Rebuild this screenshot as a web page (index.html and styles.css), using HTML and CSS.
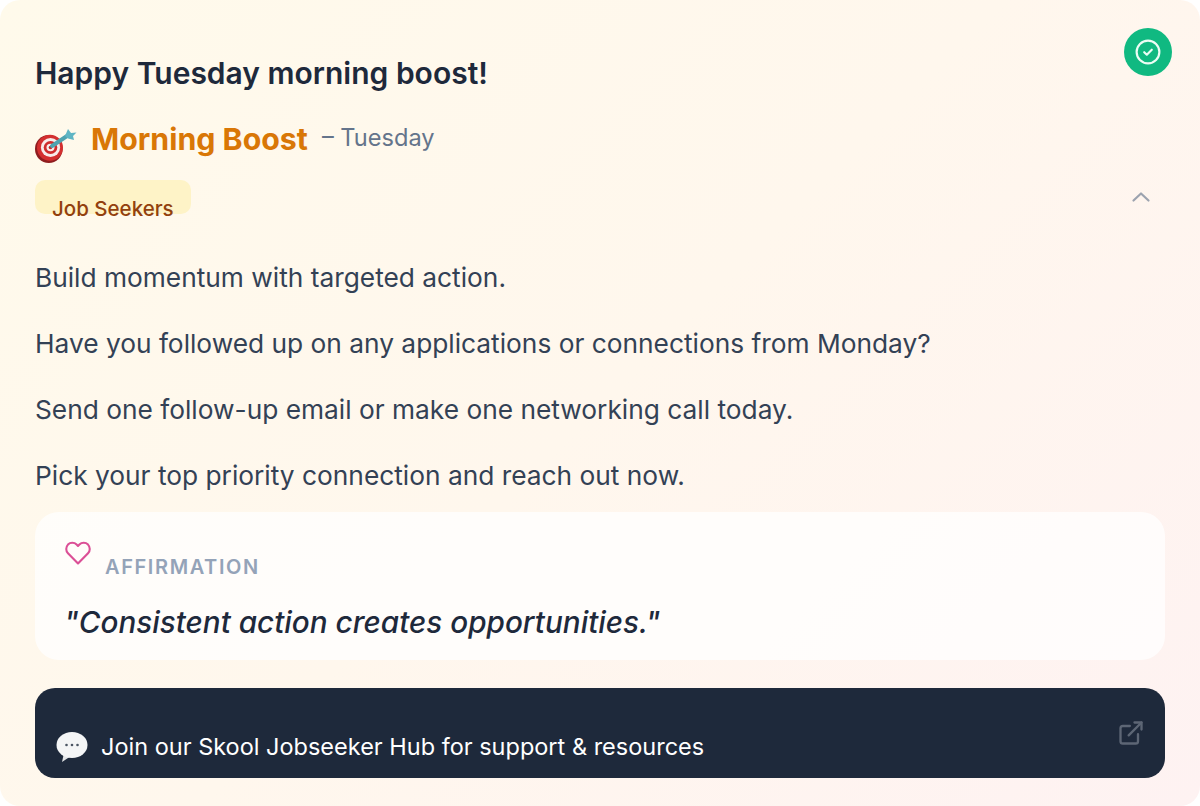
FILE: index.html
```html
<!DOCTYPE html>
<html lang="en">
  <head>
    <meta charset="UTF-8" />
    <meta name="viewport" content="width=device-width, initial-scale=1" />
    <title>Morning Boost</title>
    <link rel="stylesheet" href="styles.css">
  </head>
  <body>
    <div class="card">
      <!-- Done button -->
      <div class="done-btn">
        <svg width="26" height="26" viewBox="0 0 24 24" fill="none" stroke="#ecfdf5" stroke-width="2" stroke-linecap="round" stroke-linejoin="round">
          <circle cx="12" cy="12" r="10.5"></circle>
          <path d="M8.5 12.2l2.4 2.3 4.6-4.6"></path>
        </svg>
      </div>

      <h2 class="greeting">Happy Tuesday morning boost!</h2>

      <div class="boost-title">
        <svg class="target-icon" width="44" height="44" viewBox="0 0 44 44">
          <ellipse cx="13.800" cy="30" rx="13.800" ry="14" fill="#8f1d1f"></ellipse>
          <ellipse cx="15" cy="28.800" rx="13" ry="13" fill="#d32f2f"></ellipse>
          <ellipse cx="15.500" cy="28.500" rx="9.600" ry="9.400" fill="#f7ecea"></ellipse>
          <ellipse cx="15.500" cy="28.500" rx="6.800" ry="6.500" fill="#cf2c2c"></ellipse>
          <ellipse cx="15.500" cy="28.500" rx="4" ry="3.700" fill="#f7ecea"></ellipse>
          <ellipse cx="15.500" cy="28.500" rx="1.800" ry="1.700" fill="#c62828"></ellipse>
          <path d="M17 27L32 17" stroke="#4fa3b0" stroke-width="4" stroke-linecap="round"></path>
          <path d="M30 17l3-7 3 4 5.500-.5-3.500 3.500 1 4-6-1.500z" fill="#5fb5c4"></path>
        </svg>
        <span class="boost-name">Morning Boost</span>
        <span class="boost-day">– Tuesday</span>
      </div>

      <div class="badge-row">
        <span class="badge">Job Seekers</span>
        <svg class="chevron" width="24" height="24" viewBox="0 0 24 24" fill="none" stroke="#9ca3af" stroke-width="2.2" stroke-linecap="round" stroke-linejoin="round">
          <path d="M4.500 15.500L12 8.500l7.500 7"></path>
        </svg>
      </div>

      <div class="message">
        <p>Build momentum with targeted action.</p>
        <p>Have you followed up on any applications or connections from Monday?</p>
        <p>Send one follow-up email or make one networking call today.</p>
        <p>Pick your top priority connection and reach out now.</p>
      </div>

      <div class="affirmation">
        <div class="affirmation-head">
          <svg class="heart" width="28" height="26" viewBox="0 0 24 22" fill="none" stroke="#db4f96" stroke-width="1.8" stroke-linejoin="round">
            <path d="M12 20L3.400 11.200a5.400 5.400 0 0 1 0-7.400 5.200 5.200 0 0 1 7.400 0L12 5l1.200-1.200a5.200 5.200 0 0 1 7.400 0 5.400 5.400 0 0 1 0 7.400z"></path>
          </svg>
          <span class="affirmation-label">AFFIRMATION</span>
        </div>
        <p class="affirmation-text">"Consistent action creates opportunities."</p>
      </div>

      <a class="hub-link" href="#">
        <span class="hub-label">
          <svg width="34" height="34" viewBox="0 0 34 34">
            <path d="M9 24l-2 9 9-6z" fill="#e4e6e8"></path>
            <ellipse cx="17" cy="16" rx="15.500" ry="13" fill="#f4f5f6"></ellipse>
            <circle cx="11.500" cy="16" r="1.300" fill="#4b5563"></circle>
            <circle cx="17" cy="16" r="1.300" fill="#4b5563"></circle>
            <circle cx="22.500" cy="16" r="1.300" fill="#4b5563"></circle>
          </svg>
          Join our Skool Jobseeker Hub for support &amp; resources
        </span>
        <svg class="external" width="28" height="28" viewBox="0 0 24 24" fill="none" stroke="#5d6675" stroke-width="2" stroke-linecap="round" stroke-linejoin="round">
          <path d="M18 13v6a2 2 0 0 1-2 2H5a2 2 0 0 1-2-2V8a2 2 0 0 1 2-2h6"></path>
          <path d="M15 3h6v6"></path>
          <path d="M10 14L21 3"></path>
        </svg>
      </a>
    </div>
  </body>
</html>
```

FILE: styles.css
```css
/* Global Styles */
body {
  margin: 0;
  background-color: #ffffff;
  font-family: Inter, "Liberation Sans", sans-serif;
}

/* Card */
.card {
  position: relative;
  box-sizing: border-box;
  height: 806px;
  padding: 55px 35px 28px;
  border-radius: 20px;
  background: linear-gradient(135deg, #fffaeb 0%, #fff7ed 50%, #fef2f2 100%);
}

.done-btn {
  position: absolute;
  top: 28px;
  right: 28px;
  width: 48px;
  height: 48px;
  border-radius: 50%;
  background-color: #10b981;
  display: flex;
  justify-content: center;
  align-items: center;
}

.greeting {
  margin: 0;
  height: 36px;
  font-size: 30px;
  line-height: 36px;
  font-weight: 600;
  color: #1e293b;
}

/* Boost title */
.boost-title {
  display: flex;
  align-items: center;
  height: 40px;
  margin-top: 28px;
}

.target-icon {
  margin: 4px 12px 0 0;
}

.boost-name {
  font-size: 30.3px;
  font-weight: 700;
  color: #d97706;
}

.boost-day {
  margin-left: 14px;
  margin-bottom: 3px;
  font-size: 23.6px;
  color: #64748b;
}

/* Badge row */
.badge-row {
  display: flex;
  justify-content: space-between;
  align-items: flex-start;
  margin-top: 21px;
}

.badge {
  box-sizing: border-box;
  width: 156px;
  height: 34px;
  padding: 18px 0 0 17px;
  border-radius: 10px;
  background-color: #fef3c7;
  color: #92400e;
  font-size: 20.5px;
  line-height: 22px;
  font-weight: 500;
}

.chevron {
  margin: 5px 12px 0 0;
}

/* Message */
.message {
  margin-top: 48px;
}

.message p {
  margin: 0 0 34px;
  height: 32px;
  font-size: 26.3px;
  line-height: 32px;
  color: #334155;
}

/* Affirmation */
.affirmation {
  box-sizing: border-box;
  height: 148px;
  margin-top: -14px;
  padding: 28px 29px 0;
  border-radius: 24px;
  background-color: rgba(255, 255, 255, 0.75);
}

.affirmation-head {
  display: flex;
  align-items: flex-start;
}

.affirmation-label {
  margin: 15px 0 0 13px;
  font-size: 20px;
  line-height: 24px;
  font-weight: 600;
  letter-spacing: 1.6px;
  color: #94a3b8;
}

.affirmation-text {
  margin: 24px 0 0;
  font-size: 29.7px;
  line-height: 38px;
  font-style: italic;
  font-weight: 500;
  color: #1e293b;
}

/* Hub link */
.hub-link {
  box-sizing: border-box;
  display: flex;
  justify-content: space-between;
  height: 90px;
  margin-top: 28px;
  padding: 28px 20px 0 20px;
  border-radius: 20px;
  background-color: #1e293b;
  color: #ffffff;
  text-decoration: none;
}

.hub-label {
  display: flex;
  align-items: center;
  gap: 12px;
  height: 60px;
  font-size: 23.5px;
  font-weight: 400;
}

.external {
  margin-top: 3px;
}
```
